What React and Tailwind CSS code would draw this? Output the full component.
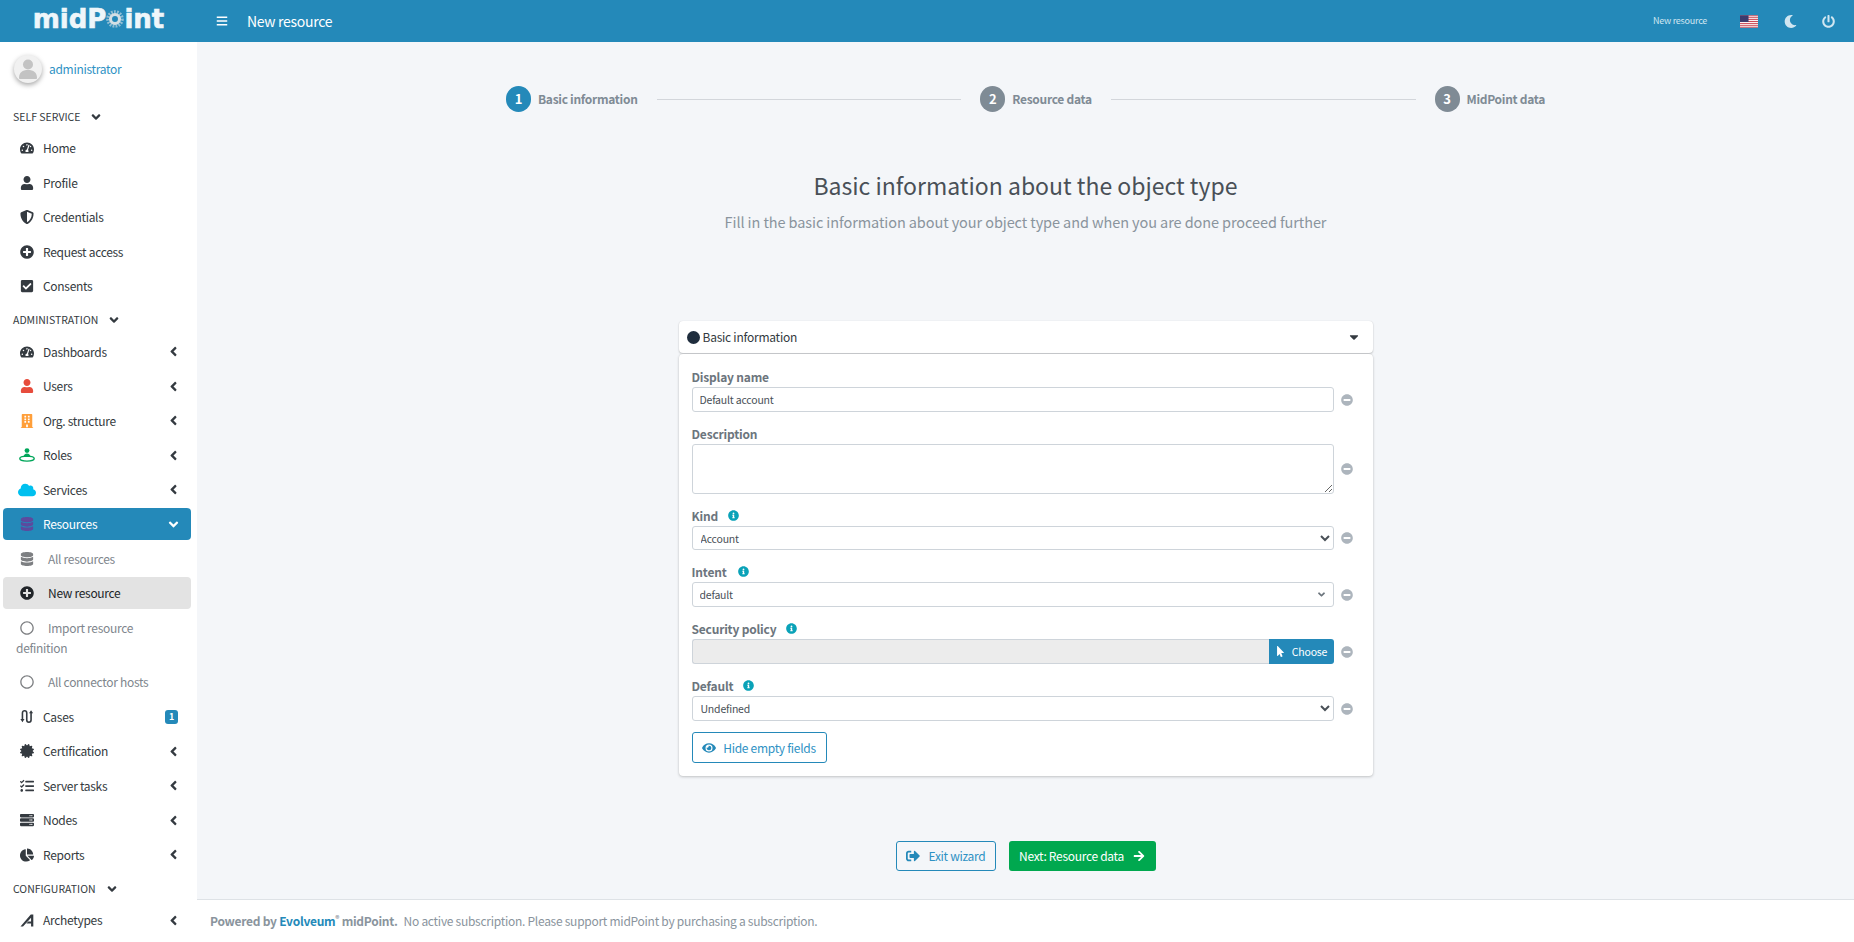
import {
  FaTachometerAlt, FaUser, FaShieldAlt, FaPlusCircle, FaCheckSquare, FaBuilding, FaCloud, FaDatabase,
  FaRegCircle, FaCertificate, FaTasks, FaServer, FaChartPie, FaAngleLeft, FaAngleDown, FaBars, FaMoon,
  FaPowerOff, FaInfoCircle, FaMinusCircle, FaEye, FaSignOutAlt, FaArrowRight, FaMousePointer, FaCaretDown,
} from 'react-icons/fa';

const font = "font-['Noto_Sans_CJK_SC','Noto_Sans',sans-serif]";

function RoleIcon({ className }) {
  return (
    <svg viewBox="0 0 16 14" className={className} fill="currentColor">
      <circle cx="8" cy="2.6" r="2.4" />
      <path d="M4.6 9c0-2.2 1.5-3.6 3.4-3.600s3.4 1.400 3.400 3.600z" />
      <ellipse cx="8" cy="10.6" rx="7.2" ry="2.5" fill="none" stroke="currentColor" strokeWidth="1.4" />
    </svg>
  );
}

function CasesIcon({ className }) {
  return (
    <svg viewBox="0 0 16 16" className={className} fill="none" stroke="currentColor" strokeWidth="1.7">
      <path d="M2.6 11V4.200a2.300 2.300 0 0 1 4.600 0v7.600a2.300 2.300 0 0 0 4.600 0V4" />
      <path d="M0.4 10.600h4.400L2.600 14zM9.600 4.600h4.400L11.800 1.200z" fill="currentColor" stroke="none" />
    </svg>
  );
}

function ArchetypeIcon({ className }) {
  return (
    <svg viewBox="0 0 16 16" className={className} fill="currentColor">
      <path d="M0.500 14.500 11.500 1.500h2.700v13h-2.400v-3.200H6.800l2-2.200h3V5L3.200 14.500z" />
    </svg>
  );
}

function UserAvatar() {
  return (
    <div className="flex h-[28px] w-[28px] items-end justify-center overflow-hidden rounded-full bg-[#f1f1f1] shadow-[0_2px_5px_rgba(0,0,0,0.35)]">
      <svg viewBox="0 0 28 28" className="h-[28px] w-[28px]" fill="#c3c3c3">
        <circle cx="14" cy="9.500" r="5" />
        <path d="M5 23c0-5.500 3.500-8 9-8s9 2.500 9 8c0 .6-.5 1-1 1H6c-.5 0-1-.4-1-1z" />
      </svg>
    </div>
  );
}

function Flag() {
  return (
    <svg viewBox="0 0 19 13" className="h-[13px] w-[18px]">
      <rect width="19" height="13" fill="#fff" />
      {[0, 2, 4, 6, 8, 10, 12].map((y) => (
        <rect key={y} y={y} width="19" height="1" fill="#c9404e" />
      ))}
      <rect width="9" height="7" fill="#3c3b6e" />
    </svg>
  );
}

function Gear() {
  return (
    <svg viewBox="0 0 20 20" className="h-[18px] w-[18px] self-center">
      <circle cx="10" cy="10" r="8" fill="none" stroke="#8fbdd4" strokeWidth="3.600" strokeDasharray="2 1.300" />
      <circle cx="10" cy="10" r="5" fill="none" stroke="#d4dfe4" strokeWidth="3.400" />
    </svg>
  );
}

function Section({ title, chevronGap = 'ml-[9px]' }) {
  return (
    <div className="flex h-[31px] items-center pl-[13px] text-[10.5px] uppercase text-[#343a40]">
      {title}
      <FaAngleDown className={`${chevronGap} text-[14px] text-[#343a40]`} />
    </div>
  );
}

function NavItem({ icon: Icon, label, iconClass = 'text-[#343a40]', chevron, badge }) {
  return (
    <div className="mx-[3px] mb-[2.5px] flex h-[32px] w-[188px] items-center rounded-[4px] pl-[16px] pr-[13px] text-[12px] tracking-[-0.3px] text-[#343a40]">
      <span className="flex w-[16px] justify-center text-[14px]">
        <Icon className={iconClass} />
      </span>
      <span className="ml-[8px] flex-1">{label}</span>
      {chevron && <FaAngleLeft className="mr-[-3px] text-[15px] text-[#343a40]" />}
      {badge && (
        <span className="flex h-[14px] w-[13px] items-center justify-center rounded-[3px] bg-[#2489b9] text-[9px] font-bold text-white">
          {badge}
        </span>
      )}
    </div>
  );
}

function SubItem({ icon: Icon, label, active, iconClass = 'text-[#7d7f82]' }) {
  return (
    <div
      className={`mx-[3px] mb-[2.5px] flex h-[32px] w-[188px] items-center rounded-[4px] pl-[16px] text-[12px] tracking-[-0.3px] ${
        active ? 'bg-[#e3e3e3] text-[#212529]' : 'text-[#80868d]'
      }`}
    >
      <span className="flex w-[16px] justify-center text-[14px]">
        <Icon className={iconClass} />
      </span>
      <span className="ml-[13px]">{label}</span>
    </div>
  );
}

function Sidebar() {
  return (
    <aside className="h-full w-[197px] shrink-0 overflow-hidden bg-white">
      <div className="flex items-center pl-[14px] pt-[13px]">
        <UserAvatar />
        <span className="ml-[7px] text-[12px] tracking-[-0.3px] text-[#2f92c4]">administrator</span>
      </div>
      <div className="mt-[18px]">
        <Section title="Self service" />
        <NavItem icon={FaTachometerAlt} label="Home" />
        <NavItem icon={FaUser} label="Profile" />
        <NavItem icon={FaShieldAlt} label="Credentials" />
        <NavItem icon={FaPlusCircle} label="Request access" />
        <NavItem icon={FaCheckSquare} label="Consents" />
        <Section title="Administration" />
        <NavItem icon={FaTachometerAlt} label="Dashboards" chevron />
        <NavItem icon={FaUser} label="Users" iconClass="text-[#e74c3c]" chevron />
        <NavItem icon={FaBuilding} label="Org. structure" iconClass="text-[#ff9f3a]" chevron />
        <NavItem icon={RoleIcon} label="Roles" iconClass="h-[14px] w-[16px] shrink-0 text-[#00a65a]" chevron />
        <NavItem icon={FaCloud} label="Services" iconClass="shrink-0 text-[18px] text-[#00c0ef]" chevron />
        <div className="mx-[3px] mb-[2.5px] flex h-[32px] w-[188px] items-center rounded-[4px] bg-[#2489b9] pl-[16px] pr-[13px] text-[12px] tracking-[-0.3px] text-white">
          <span className="flex w-[16px] justify-center text-[14px]">
            <FaDatabase className="text-[#5c4a9e]" />
          </span>
          <span className="ml-[8px] flex-1">Resources</span>
          <FaAngleDown className="mr-[-3px] text-[15px]" />
        </div>
        <SubItem icon={FaDatabase} label="All resources" />
        <SubItem icon={FaPlusCircle} label="New resource" active iconClass="text-[#212529]" />
        <div className="mx-[3px] mb-[2.5px] w-[188px] py-[6px] pl-[13px] pr-[16px] text-[12px] leading-[20px] tracking-[-0.3px] text-[#80868d]">
          <FaRegCircle className="ml-[4px] mr-[14px] inline-block align-[-2px] text-[14px] text-[#7d7f82]" />
          Import resource definition
        </div>
        <SubItem icon={FaRegCircle} label="All connector hosts" />
        <NavItem icon={CasesIcon} label="Cases" iconClass="h-[15px] w-[15px] text-[#343a40]" badge="1" />
        <NavItem icon={FaCertificate} label="Certification" chevron />
        <NavItem icon={FaTasks} label="Server tasks" chevron />
        <NavItem icon={FaServer} label="Nodes" chevron />
        <NavItem icon={FaChartPie} label="Reports" chevron />
        <Section title="Configuration" />
        <NavItem icon={ArchetypeIcon} label="Archetypes" iconClass="h-[15px] w-[15px] text-[#343a40]" chevron />
      </div>
    </aside>
  );
}

function Step({ n, label, active }) {
  return (
    <div className="flex shrink-0 items-center">
      <span
        className={`flex h-[26px] w-[25px] items-center justify-center rounded-full text-[13px] font-bold text-white ${
          active ? 'bg-[#2489b9]' : 'bg-[#7f8b95]'
        }`}
      >
        {n}
      </span>
      <span className="ml-[7px] text-[12px] font-bold tracking-[-0.3px] text-[#7f8b95]">{label}</span>
    </div>
  );
}

function Field({ label, info, infoGap = 'ml-[10px]', children }) {
  return (
    <div className="mb-[11px]">
      <div className="flex h-[21px] items-center text-[12px] font-bold leading-[21px] tracking-[-0.2px] text-[#6c757d]">
        {label}
        {info && <FaInfoCircle className={`${infoGap} text-[11px] text-[#0aa2b8]`} />}
      </div>
      <div className="flex items-center">
        <div className="w-[642px]">{children}</div>
        <FaMinusCircle className="ml-[7px] text-[12px] text-[#adb5bd]" />
      </div>
    </div>
  );
}

const controlClass =
  'block w-full rounded-[3px] border border-[#ced4da] bg-white text-[10.5px] tracking-[-0.2px] text-[#495057] outline-none';

function BasicInfoCard() {
  return (
    <div className="mx-auto mt-[87px] w-[694px]">
      <div className="flex h-[32px] items-center rounded-[4px] bg-white pl-[8px] pr-[12px] shadow-[0_0_1px_rgba(0,0,0,0.13),0_1px_2px_rgba(0,0,0,0.2)]">
        <span className="h-[13px] w-[13px] rounded-full bg-[#1f2d3d]" />
        <span className="ml-[3px] flex-1 text-[12px] tracking-[-0.25px] text-[#343a40]">Basic information</span>
        <FaCaretDown className="text-[14px] text-[#343a40]" />
      </div>
      <div className="mt-[1px] rounded-[4px] bg-white pb-[13px] pl-[13px] pt-[12px] shadow-[0_0_1px_rgba(0,0,0,0.13),0_1px_3px_rgba(0,0,0,0.2)]">
        <Field label="Display name">
          <input readOnly value="Default account" className={`${controlClass} h-[25px] px-[7px]`} />
        </Field>
        <Field label="Description">
          <textarea readOnly className={`${controlClass} h-[50px] px-[7px] py-[4px]`} />
        </Field>
        <Field label="Kind" info>
          <select defaultValue="Account" className={`${controlClass} h-[24px] px-[4px]`}>
            <option>Account</option>
          </select>
        </Field>
        <Field label="Intent" info infoGap="ml-[11px]">
          <div className="relative">
            <input readOnly value="default" className={`${controlClass} h-[25px] px-[7px]`} />
            <FaAngleDown className="absolute right-[7px] top-[7px] text-[11px] text-[#6c757d]" />
          </div>
        </Field>
        <Field label="Security policy" info>
          <div className="flex h-[25px]">
            <div className="flex-1 rounded-l-[3px] border border-r-0 border-[#ced4da] bg-[#ececec]" />
            <button className="flex w-[65px] items-center justify-center rounded-r-[3px] bg-[#2489b9] text-[10.5px] tracking-[-0.2px] text-white">
              <FaMousePointer className="mr-[6px] text-[11px]" />
              Choose
            </button>
          </div>
        </Field>
        <Field label="Default" info>
          <select defaultValue="Undefined" className={`${controlClass} h-[25px] px-[4px]`}>
            <option>Undefined</option>
          </select>
        </Field>
        <button className="mt-[2px] flex h-[31px] w-[135px] items-center justify-center whitespace-nowrap rounded-[3px] border border-[#2489b9] bg-white text-[12px] tracking-[-0.3px] text-[#2f92c4]">
          <FaEye className="mr-[7px] text-[14px] text-[#2489b9]" />
          Hide empty fields
        </button>
      </div>
    </div>
  );
}

export default function App() {
  return (
    <div className={`flex h-screen w-full flex-col overflow-hidden bg-[#f4f6f9] ${font}`}>
      <header className="flex h-[42px] shrink-0 items-center bg-[#2489b9] text-white">
        <div className="flex w-[197px] items-center justify-center pb-[4px] font-['DejaVu_Sans',sans-serif] text-[26px] font-bold leading-[30px] text-[#eef6fa] [-webkit-text-stroke:0.6px_#eef6fa]">
          midP
          <Gear />
          int
        </div>
        <FaBars className="ml-[19px] text-[12px]" />
        <span className="ml-[19px] text-[14px] tracking-[-0.3px]">New resource</span>
        <div className="ml-auto flex items-center text-[#d0e6f1]">
          <span className="text-[9px] tracking-[-0.25px]">New resource</span>
          <span className="ml-[33px]">
            <Flag />
          </span>
          <FaMoon className="ml-[26px] text-[13px]" />
          <FaPowerOff className="ml-[25px] mr-[19px] text-[13px]" />
        </div>
      </header>
      <div className="flex min-h-0 flex-1">
        <Sidebar />
        <div className="flex min-w-0 flex-1 flex-col">
          <main className="min-h-0 flex-1 overflow-hidden">
            <div className="mx-auto mt-[44px] flex w-[1039px] items-center">
              <Step n="1" label="Basic information" active />
              <div className="mx-[19px] h-px flex-1 bg-[#d3d6db]" />
              <Step n="2" label="Resource data" />
              <div className="mx-[19px] h-px flex-1 bg-[#d3d6db]" />
              <Step n="3" label="MidPoint data" />
            </div>
            <h1 className="mt-[55px] text-center text-[23px] leading-[36px] text-[#495057]">
              Basic information about the object type
            </h1>
            <p className="mt-[7px] text-center text-[14.5px] leading-[24px] tracking-[-0.09px] text-[#8a949d]">
              Fill in the basic information about your object type and when you are done proceed further
            </p>
            <BasicInfoCard />
            <div className="mt-[65px] flex justify-center">
              <button className="flex h-[30px] w-[100px] items-center justify-center whitespace-nowrap rounded-[3px] border border-[#2489b9] text-[12px] tracking-[-0.3px] text-[#2f92c4]">
                <FaSignOutAlt className="mr-[9px] text-[14px] text-[#2489b9]" />
                Exit wizard
              </button>
              <button className="ml-[13px] flex h-[30px] w-[147px] items-center justify-center whitespace-nowrap rounded-[3px] bg-[#00a84f] text-[12px] tracking-[-0.3px] text-white">
                Next: Resource data
                <FaArrowRight className="ml-[9px] text-[12px]" />
              </button>
            </div>
          </main>
          <footer className="flex h-[43px] shrink-0 items-center whitespace-pre border-t border-[#dee2e6] bg-white pl-[13px] text-[12px] tracking-[-0.27px] text-[#8a949d]">
            <b className="font-bold">Powered by </b>
            <b className="font-bold text-[#2489b9]">Evolveum</b>
            <b className="font-bold">
              <sup className="text-[8px]">®</sup> midPoint.
            </b>
            <span className="ml-[6px]">No active subscription. Please support midPoint by purchasing a subscription.</span>
          </footer>
        </div>
      </div>
    </div>
  );
}
